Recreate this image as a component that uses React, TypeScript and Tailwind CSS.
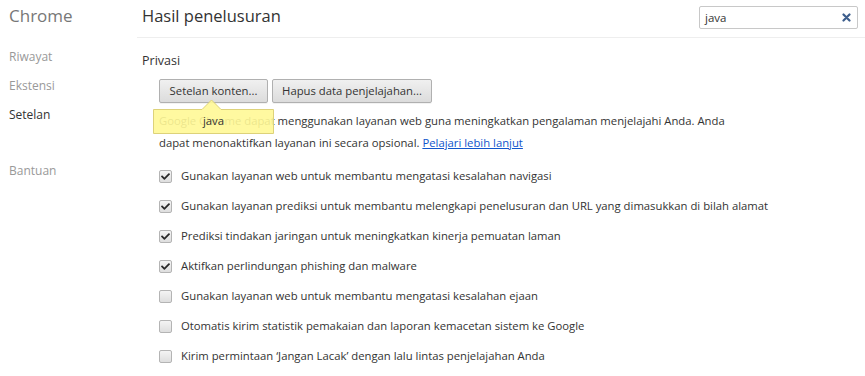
import { FaCheck } from "react-icons/fa";

const font = { fontFamily: '"Open Sans", "Noto Sans", "Liberation Sans", sans-serif' };

const options = [
  { label: "Gunakan layanan web untuk membantu mengatasi kesalahan navigasi", checked: true },
  { label: "Gunakan layanan prediksi untuk membantu melengkapi penelusuran dan URL yang dimasukkan di bilah alamat", checked: true },
  { label: "Prediksi tindakan jaringan untuk meningkatkan kinerja pemuatan laman", checked: true },
  { label: "Aktifkan perlindungan phishing dan malware", checked: true },
  { label: "Gunakan layanan web untuk membantu mengatasi kesalahan ejaan", checked: false },
  { label: "Otomatis kirim statistik pemakaian dan laporan kemacetan sistem ke Google", checked: false },
  { label: "Kirim permintaan \u2018Jangan Lacak\u2019 dengan lalu lintas penjelajahan Anda", checked: false },
];

const Checkbox = ({ checked }: { checked: boolean }) => (
  <div className="w-[13px] h-[13px] shrink-0 rounded-[2px] border border-[#b4b4b4] bg-gradient-to-b from-[#f4f4f4] to-[#dedede] flex items-center justify-center">
    {checked && <FaCheck className="text-[9px] text-[#2a2a2a]" />}
  </div>
);

const App = () => {
  return (
    <div className="w-[865px] h-[376px] bg-white flex overflow-hidden text-[#333]" style={font}>
      {/* Sidebar */}
      <aside className="w-[137px] shrink-0 pl-[9px] pt-[4px]">
        <div className="text-[17px] leading-[24px] text-[#777]">Chrome</div>
        <nav className="mt-[14px] text-[12px]">
          <div className="h-[29px] leading-[29px] text-[#999]">Riwayat</div>
          <div className="h-[29px] leading-[29px] text-[#999]">Ekstensi</div>
          <div className="h-[29px] leading-[29px] text-[#333]">Setelan</div>
          <div className="h-[29px] leading-[29px] text-[#999] mt-[27px]">Bantuan</div>
        </nav>
      </aside>

      {/* Main */}
      <main className="flex-1">
        <header className="h-[38px] border-b border-[#eeeeee] flex items-start justify-between pl-[5px] pr-[7px]">
          <h1 className="text-[16.5px] leading-[24px] pt-[4px] text-[#333]">Hasil penelusuran</h1>
          <div className="mt-[6px] w-[159px] h-[23px] border border-[#c8c8c8] rounded-[2px] flex items-center justify-between pl-[5px] pr-[6px] text-[11.5px]">
            <span>java</span>
            <svg width="9" height="9" viewBox="0 0 9 9">
              <path d="M1.5 1.5 L7.5 7.5 M7.5 1.5 L1.5 7.5" stroke="#3d5e8c" strokeWidth="2.2" strokeLinecap="round" />
            </svg>
          </div>
        </header>

        <section className="pl-[5px] pt-[13px]">
          <h2 className="text-[12.5px] leading-[20px]">Privasi</h2>
          <div className="pl-[17px]">
            <div className="relative flex gap-[4px] mt-[8px]">
              <button className="h-[24px] w-[109px] rounded-[2px] border border-[#b0b0b0] bg-gradient-to-b from-[#f0f0f0] to-[#dcdcdc] text-[11.3px] text-[#333] shadow-[0_1px_0_rgba(0,0,0,0.05)]">
                Setelan konten...
              </button>
              <button className="h-[24px] w-[160px] rounded-[2px] border border-[#b0b0b0] bg-gradient-to-b from-[#f0f0f0] to-[#dcdcdc] text-[11.3px] text-[#333] shadow-[0_1px_0_rgba(0,0,0,0.05)]">
                Hapus data penjelajahan...
              </button>

              {/* Bubble */}
              <div className="absolute left-[-6px] top-[30px] w-[121px] h-[25px] z-10">
                <svg className="absolute left-0 top-[-12px]" width="121" height="37" viewBox="0 0 121 37">
                  <path
                    d="M0.5 12.5 H49 L58.5 3 L68 12.5 H120.5 V36.5 H0.5 Z"
                    fill="rgba(255,248,150,0.9)"
                    stroke="#ddd27a"
                    strokeWidth="1"
                  />
                </svg>
                <div className="relative h-full flex items-center justify-center text-[11.3px] text-[#333]">java</div>
              </div>
            </div>

            <p className="mt-[7px] text-[11.3px] leading-[22px]">
              Google Chrome dapat menggunakan layanan web guna meningkatkan pengalaman menjelajahi Anda. Anda
              <br />
              dapat menonaktifkan layanan ini secara opsional.{" "}
              <a className="text-[#1155cc] underline">Pelajari lebih lanjut</a>
            </p>

            <ul className="mt-[7px]">
              {options.map((o) => (
                <li key={o.label} className="h-[30px] flex items-center gap-[9px] text-[11.3px]">
                  <Checkbox checked={o.checked} />
                  <span>{o.label}</span>
                </li>
              ))}
            </ul>
          </div>
        </section>
      </main>
    </div>
  );
};

export default App;
